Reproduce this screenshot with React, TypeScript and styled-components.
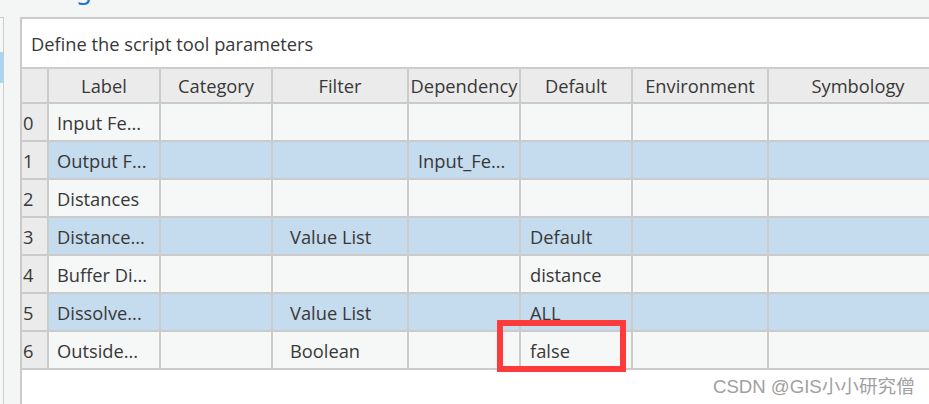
import React from "react";
import styled, { createGlobalStyle } from "styled-components";

const Global = createGlobalStyle`
  html, body { margin: 0; padding: 0; }
  body {
    width: 929px;
    height: 404px;
    overflow: hidden;
    background: #f4f5f5;
    font-family: "Open Sans", "Noto Sans", "Noto Sans CJK SC", sans-serif;
    color: #383838;
  }
`;

const Page = styled.div`
  position: relative;
  width: 929px;
  height: 404px;
  display: flex;
  flex-direction: column;
  overflow: hidden;
`;

const TopBar = styled.div`
  height: 17px;
  overflow: hidden;
  padding-left: 30px;
  flex: none;
`;

const Title = styled.div`
  font-family: "Noto Sans", sans-serif;
  font-size: 26px;
  line-height: 1;
  margin-top: -24px;
  color: #1b74c9;
  white-space: nowrap;
`;

const Body = styled.div`
  flex: 1;
  display: flex;
  align-items: stretch;
`;

const SideTabs = styled.div`
  flex: none;
  width: 4px;
  border-top: 1px solid #cdcdcd;
  border-right: 1px solid #cdcdcd;
  background: #f7f7f7;
  margin-right: 16px;
  padding-top: 34px;
  box-sizing: border-box;
`;

const Tab = styled.div<{ $active?: boolean }>`
  height: 31px;
  background: ${(p) => (p.$active ? "#a8d5f3" : "transparent")};
`;

const Panel = styled.div`
  flex: none;
  width: 1000px;
  background: #ffffff;
  border-top: 2px solid #cbcbcb;
  border-left: 2px solid #cbcbcb;
  display: flex;
  flex-direction: column;
`;

const Description = styled.div`
  height: 48px;
  display: flex;
  align-items: center;
  padding-left: 9px;
  font-size: 18.3px;
`;

const Grid = styled.div`
  display: grid;
  grid-template-columns: 27px 112px 112px 136px 112px 112px 136px 180px;
  border-top: 2px solid #cbcbcb;
`;

const HeadCell = styled.div`
  height: 33px;
  background: #ebebeb;
  border-right: 2px solid #cbcbcb;
  border-bottom: 2px solid #cbcbcb;
  display: flex;
  align-items: center;
  justify-content: center;
  font-size: 18.3px;
  white-space: nowrap;
  overflow: hidden;
`;

const Cell = styled.div<{ $sel?: boolean; $index?: boolean; $pad?: number }>`
  height: 36px;
  background: ${(p) => (p.$index ? "#ebebeb" : p.$sel ? "#c5dbee" : "#f6f7f7")};
  border-right: 2px solid #cbcbcb;
  border-bottom: 2px solid #cbcbcb;
  display: flex;
  align-items: center;
  padding-left: ${(p) => (p.$index ? 1 : p.$pad ?? 9)}px;
  font-size: 18.3px;
  white-space: nowrap;
  overflow: hidden;
`;

const Highlight = styled.div`
  position: absolute;
  left: 497px;
  top: 320px;
  width: 129px;
  height: 52px;
  box-sizing: border-box;
  border: 6px solid #ff3a3a;
  pointer-events: none;
`;

const Watermark = styled.div`
  position: absolute;
  left: 713px;
  top: 371px;
  font-family: "Liberation Sans", "Noto Sans CJK SC", sans-serif;
  font-size: 18.6px;
  color: #a0a0a0;
  text-shadow: 0 0 2px #ffffff, 0 0 1px #ffffff;
  white-space: nowrap;
`;

const headers = ["", "Label", "Category", "Filter", "Dependency", "Default", "Environment", "Symbology"];
const pads = [1, 8, 9, 17, 9, 9, 9, 9];

const rows: string[][] = [
  ["0", "Input Fe...", "", "", "", "", "", ""],
  ["1", "Output F...", "", "", "Input_Fe...", "", "", ""],
  ["2", "Distances", "", "", "", "", "", ""],
  ["3", "Distance...", "", "Value List", "", "Default", "", ""],
  ["4", "Buffer Di...", "", "", "", "distance", "", ""],
  ["5", "Dissolve...", "", "Value List", "", "ALL", "", ""],
  ["6", "Outside...", "", "Boolean", "", "false", "", ""],
];

export default function App() {
  return (
    <>
      <Global />
      <Page>
        <TopBar>
          <Title>Usage</Title>
        </TopBar>
        <Body>
          <SideTabs>
            <Tab $active />
          </SideTabs>
          <Panel>
            <Description>Define the script tool parameters</Description>
            <Grid>
              {headers.map((h, i) => (
                <HeadCell key={"h" + i}>{h}</HeadCell>
              ))}
              {rows.map((r, ri) =>
                r.map((c, ci) => (
                  <Cell
                    key={ri + "-" + ci}
                    $index={ci === 0}
                    $sel={ri % 2 === 1}
                    $pad={pads[ci]}
                  >
                    {c}
                  </Cell>
                ))
              )}
            </Grid>
          </Panel>
        </Body>
        <Highlight />
        <Watermark>CSDN @GIS小小研究僧</Watermark>
      </Page>
    </>
  );
}
